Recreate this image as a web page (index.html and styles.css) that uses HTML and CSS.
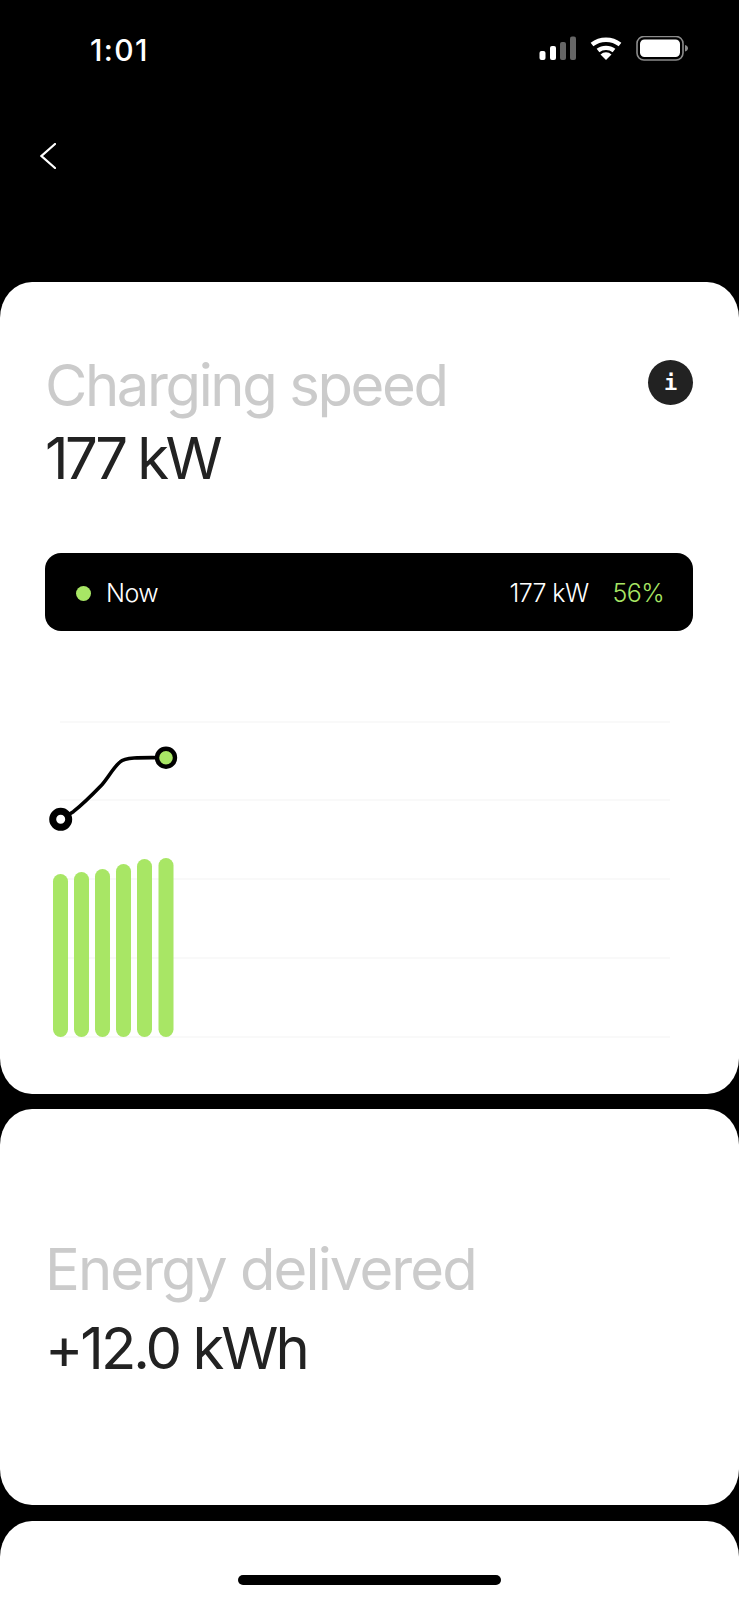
FILE: index.html
```html
<!DOCTYPE html>
<html lang="en">
<head>
    <meta charset="UTF-8">
    <meta name="viewport" content="width=device-width, initial-scale=1.0">
    <title>Charging</title>
    <link rel="stylesheet" href="styles.css">
</head>
<body>
    <div class="status">
        <span class="time">1:01</span>
        <svg class="status-icons" width="150" height="26" viewBox="0 0 150 26">
            <rect x="0.5" y="15" width="6" height="9" rx="2" fill="#fff"/>
            <rect x="11" y="10" width="6" height="14" rx="2" fill="#fff"/>
            <rect x="21" y="6" width="6" height="18" rx="2" fill="#666"/>
            <rect x="31" y="0.5" width="6" height="23.5" rx="2" fill="#666"/>
            <path d="M53 8.5 A 23 23 0 0 1 81 8.5" fill="none" stroke="#fff" stroke-width="4.4"/>
            <path d="M59 14.6 A 13 13 0 0 1 75 14.6" fill="none" stroke="#fff" stroke-width="4.4"/>
            <path d="M61.5 18.4 L67 24 L72.5 18.4 A 8.4 8.4 0 0 0 61.5 18.4 Z" fill="#fff"/>
            <rect x="98" y="0.5" width="46" height="23.5" rx="7" fill="none" stroke="#8c8c8c" stroke-width="1.6"/>
            <rect x="101" y="3.5" width="40" height="17.5" rx="4.5" fill="#fff"/>
            <path d="M146 9 C 148 9.5 149 11 149 12.3 C 149 13.6 148 15 146 15.5 Z" fill="#8c8c8c"/>
        </svg>
    </div>

    <div class="nav">
        <svg width="16" height="26" viewBox="0 0 16 26">
            <path d="M15 1 L1.5 13 L15 25" fill="none" stroke="#fff" stroke-width="2.2" stroke-linecap="round"/>
        </svg>
    </div>

    <div class="card speed-card">
        <div class="card-head">
            <div>
                <div class="label">Charging speed</div>
                <div class="value">177 kW</div>
            </div>
            <span class="info">i</span>
        </div>

        <div class="now-bar">
            <span class="dot"></span>
            <span class="now-label">Now</span>
            <span class="now-kw">177 kW</span>
            <span class="now-pct">56%</span>
        </div>

        <svg class="chart" width="648" height="345" viewBox="0 0 648 345">
            <g stroke="#f3f3f3" stroke-width="1">
                <line x1="15" y1="22" x2="625" y2="22"/>
                <line x1="15" y1="100" x2="625" y2="100"/>
                <line x1="15" y1="179" x2="625" y2="179"/>
                <line x1="15" y1="258" x2="625" y2="258"/>
                <line x1="15" y1="337" x2="625" y2="337"/>
            </g>
            <g fill="#a8e665">
                <rect x="8" y="174" width="15" height="163" rx="7.5"/>
                <rect x="29" y="172" width="15" height="165" rx="7.5"/>
                <rect x="50" y="169" width="15" height="168" rx="7.5"/>
                <rect x="71" y="164" width="15" height="173" rx="7.5"/>
                <rect x="92" y="159" width="15" height="178" rx="7.5"/>
                <rect x="113.5" y="158" width="15" height="179" rx="7.5"/>
            </g>
            <path d="M15.7 119.3 L28.3 111.7 C38 104 48 94 56.7 85 C63 78 68 68 75 62 C80 57.5 92 57.3 121 57.7" fill="none" stroke="#000" stroke-width="3.6"/>
            <circle cx="15.7" cy="119.3" r="8" fill="#fff" stroke="#000" stroke-width="7"/>
            <circle cx="121" cy="57.7" r="9" fill="#a8e665" stroke="#000" stroke-width="4.4"/>
        </svg>
    </div>

    <div class="card energy-card">
        <div class="label">Energy delivered</div>
        <div class="value">+12.0 kWh</div>
    </div>

    <div class="card last-card"></div>

    <div class="home-bar"></div>
</body>
</html>
```

FILE: styles.css
```css
html, body {
    margin: 0;
    height: 1600px;
    overflow: hidden;
}
body {
    background-color: #000;
    font-family: Inter, "Liberation Sans", sans-serif;
    position: relative;
}
.status {
    height: 97px;
    display: flex;
    justify-content: space-between;
    align-items: center;
    padding: 0 50px 0 90px;
    color: #fff;
}
.time {
    font-size: 30px;
    font-weight: 500;
    letter-spacing: 1.4px;
    padding-top: 2px;
}
.nav {
    height: 185px;
    box-sizing: border-box;
    padding: 46px 0 0 40px;
}
.nav svg {
    display: block;
}
.card {
    background-color: #fff;
    border-radius: 32px / 36px;
    box-sizing: border-box;
}
.speed-card {
    height: 812px;
    padding: 67px 46px 0 45px;
}
.energy-card {
    height: 396px;
    margin-top: 15px;
    padding: 4px 45px 0;
    display: flex;
    flex-direction: column;
    justify-content: center;
}
.energy-card .label {
    margin-bottom: 6px;
    letter-spacing: -1.9px;
}
.energy-card .value {
    letter-spacing: -3px;
}
.last-card {
    height: 120px;
    margin-top: 16px;
}
.card-head {
    display: flex;
    justify-content: space-between;
    align-items: flex-start;
}
.label,
.value {
    font-size: 58px;
    font-weight: 400;
    line-height: 73px;
}
.label {
    color: #cbcbcb;
    letter-spacing: -2.4px;
}
.value {
    color: #222;
    letter-spacing: -3.6px;
}
.info {
    width: 45px;
    height: 45px;
    margin-top: 11px;
    border-radius: 50%;
    background-color: #222;
    color: #fff;
    font-family: "DejaVu Sans Mono", monospace;
    font-weight: bold;
    font-size: 22px;
    line-height: 45px;
    text-align: center;
}
.now-bar {
    height: 78px;
    margin-top: 58px;
    padding: 2px 29px 0 31px;
    box-sizing: border-box;
    background-color: #000;
    border-radius: 16px;
    display: flex;
    align-items: center;
    color: #fff;
    font-size: 25px;
    font-weight: 300;
    letter-spacing: -0.6px;
}
.dot {
    width: 15px;
    height: 15px;
    border-radius: 50%;
    background-color: #a8e665;
    margin-right: 15px;
}
.now-label {
    flex: 1;
}
.now-pct {
    color: #a8e665;
    margin-left: 24px;
}
.chart {
    display: block;
    margin-top: 69px;
}
.home-bar {
    position: absolute;
    left: 238px;
    bottom: 15px;
    width: 263px;
    height: 10px;
    border-radius: 5px;
    background-color: #000;
}
```
